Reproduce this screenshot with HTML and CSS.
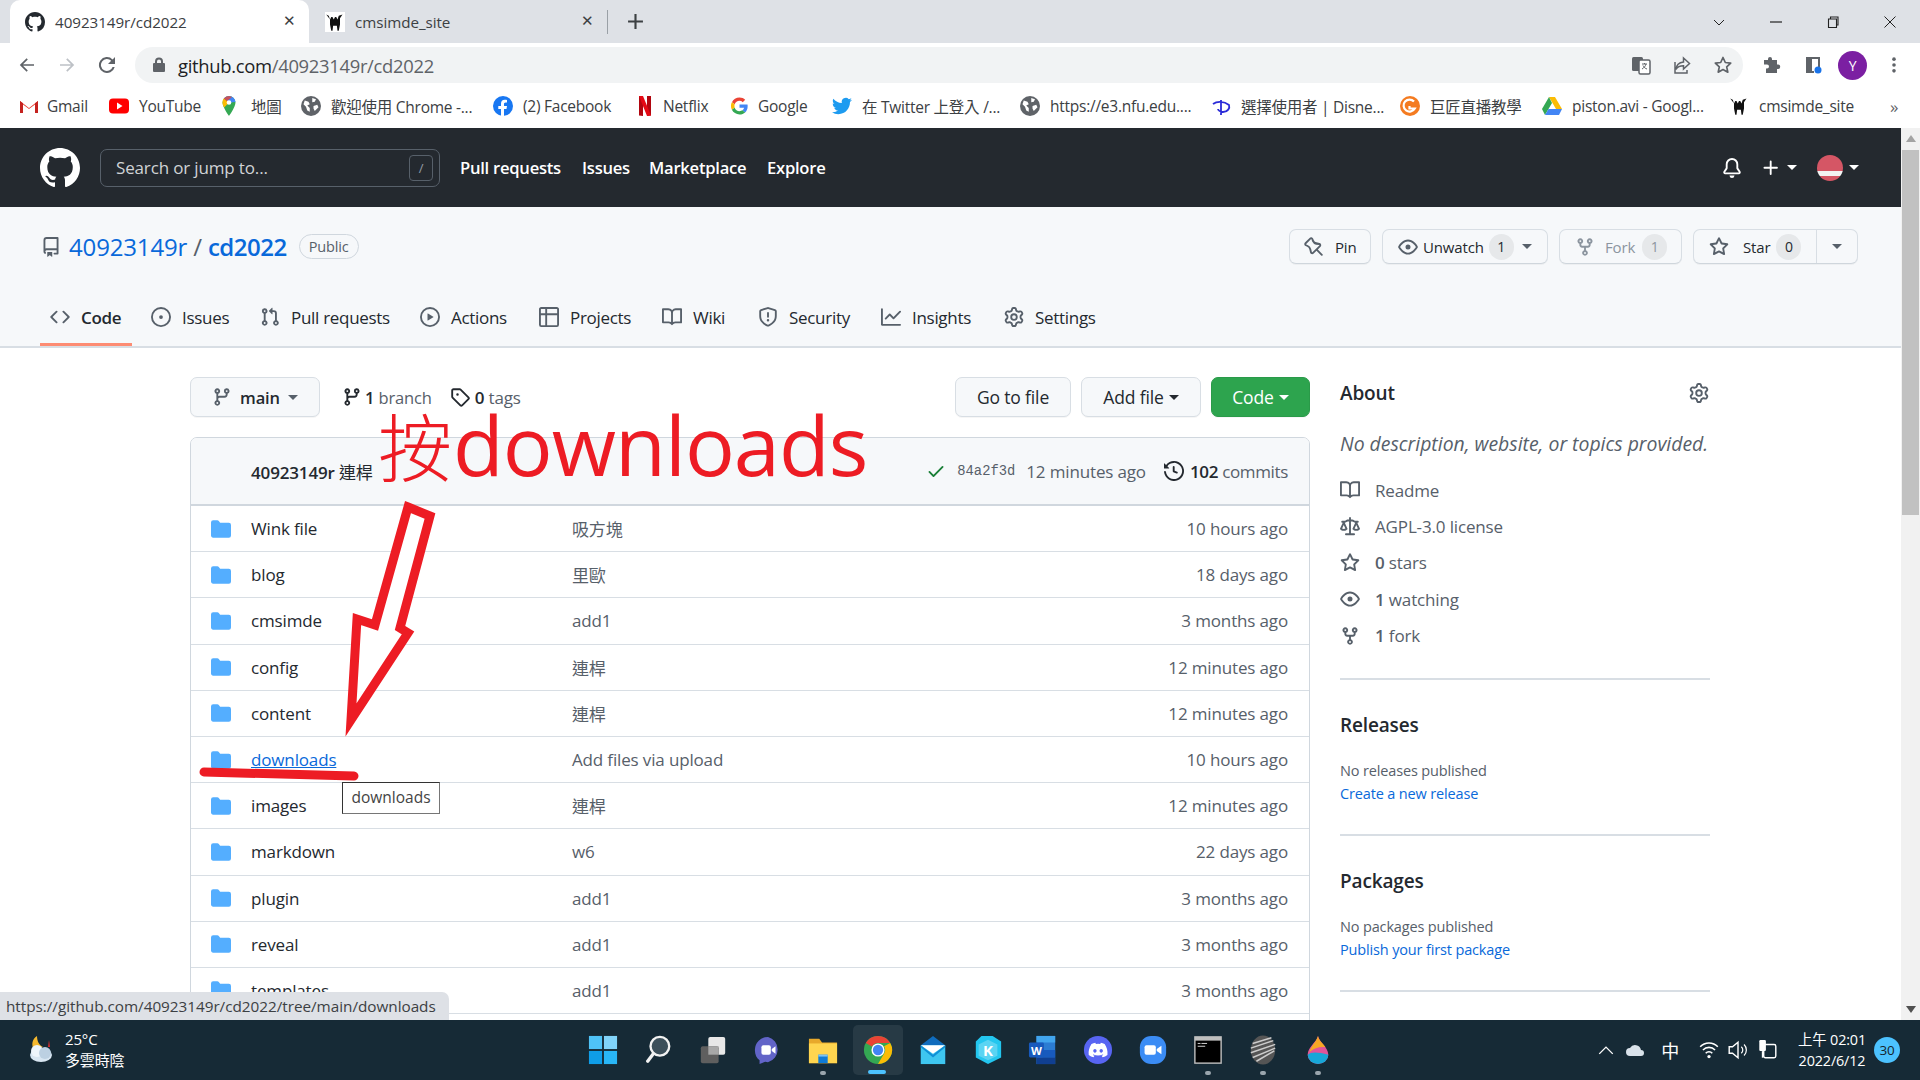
FILE: index.html
```html
<!DOCTYPE html>
<html lang="zh-Hant">
<head>
<meta charset="utf-8">
<title>40923149r/cd2022</title>
<link rel="stylesheet" href="styles.css">
</head>
<body>
<svg class="defs" width="0" height="0">
<defs>
<symbol id="i-mark" viewBox="0 0 16 16"><path d="M8 0C3.58 0 0 3.58 0 8c0 3.54 2.29 6.53 5.47 7.59.4.07.55-.17.55-.38 0-.19-.01-.82-.01-1.49-2.01.37-2.53-.49-2.69-.94-.09-.23-.48-.94-.82-1.13-.28-.15-.68-.52-.01-.53.63-.01 1.08.58 1.23.82.72 1.21 1.87.87 2.33.66.07-.52.28-.87.51-1.07-1.78-.2-3.64-.89-3.64-3.95 0-.87.31-1.59.82-2.15-.08-.2-.36-1.02.08-2.12 0 0 .67-.21 2.2.82.64-.18 1.32-.27 2-.27.68 0 1.36.09 2 .27 1.53-1.04 2.2-.82 2.2-.82.44 1.1.16 1.92.08 2.12.51.56.82 1.27.82 2.15 0 3.07-1.87 3.75-3.65 3.95.29.25.54.73.54 1.48 0 1.07-.01 1.93-.01 2.2 0 .21.15.46.55.38A8.013 8.013 0 0016 8c0-4.42-3.58-8-8-8z"/></symbol>
<symbol id="i-repo" viewBox="0 0 16 16"><path d="M2 2.5A2.5 2.5 0 014.5 0h8.75a.75.75 0 01.75.75v12.5a.75.75 0 01-.75.75h-2.5a.75.75 0 110-1.5h1.75v-2h-8a1 1 0 00-.714 1.7.75.75 0 01-1.072 1.05A2.495 2.495 0 012 11.5v-9zm10.5-1V9h-8c-.356 0-.694.074-1 .208V2.5a1 1 0 011-1h8zM5 12.25v3.25a.25.25 0 00.4.2l1.45-1.087a.25.25 0 01.3 0L8.6 15.7a.25.25 0 00.4-.2v-3.25a.25.25 0 00-.25-.25h-3.5a.25.25 0 00-.25.25z"/></symbol>
<symbol id="i-code" viewBox="0 0 16 16"><path d="M4.72 3.22a.75.75 0 011.06 1.06L2.06 8l3.72 3.72a.75.75 0 11-1.06 1.06L.47 8.53a.75.75 0 010-1.06l4.25-4.25zm6.56 0a.75.75 0 10-1.06 1.06L13.94 8l-3.72 3.72a.75.75 0 101.06 1.06l4.25-4.25a.75.75 0 000-1.06l-4.25-4.25z"/></symbol>
<symbol id="i-issue" viewBox="0 0 16 16"><path d="M8 9.5a1.5 1.5 0 100-3 1.5 1.5 0 000 3z"/><path d="M8 0a8 8 0 100 16A8 8 0 008 0zM1.5 8a6.5 6.5 0 1113 0 6.5 6.5 0 01-13 0z"/></symbol>
<symbol id="i-pr" viewBox="0 0 16 16"><path d="M7.177 3.073L9.573.677A.25.25 0 0110 .854v4.792a.25.25 0 01-.427.177L7.177 3.427a.25.25 0 010-.354zM3.75 2.5a.75.75 0 100 1.5.75.75 0 000-1.5zm-2.25.75a2.25 2.25 0 113 2.122v5.256a2.251 2.251 0 11-1.5 0V5.372A2.25 2.25 0 011.5 3.25zM11 2.5h-1V4h1a1 1 0 011 1v5.628a2.251 2.251 0 101.5 0V5A2.5 2.5 0 0011 2.5zm1 10.25a.75.75 0 111.5 0 .75.75 0 01-1.5 0zM3.75 12a.75.75 0 100 1.5.75.75 0 000-1.5z"/></symbol>
<symbol id="i-play" viewBox="0 0 16 16"><path d="M1.5 8a6.5 6.5 0 1113 0 6.5 6.5 0 01-13 0zM8 0a8 8 0 100 16A8 8 0 008 0zM6.379 5.227A.25.25 0 006 5.442v5.117a.25.25 0 00.379.214l4.264-2.559a.25.25 0 000-.428L6.379 5.227z"/></symbol>
<symbol id="i-table" viewBox="0 0 16 16"><path d="M0 1.75C0 .784.784 0 1.75 0h12.5C15.216 0 16 .784 16 1.75v12.5A1.75 1.75 0 0114.25 16H1.75A1.75 1.75 0 010 14.25V1.75zM1.5 6.5v7.75c0 .138.112.25.25.25H5v-8H1.5zM5 5H1.5V1.75a.25.25 0 01.25-.25H5V5zm1.5 1.5v8h7.75a.25.25 0 00.25-.25V6.5h-8zm8-1.5h-8V1.5h7.75a.25.25 0 01.25.25V5z"/></symbol>
<symbol id="i-book" viewBox="0 0 16 16"><path d="M0 1.75A.75.75 0 01.75 1h4.253c1.227 0 2.317.59 3 1.501A3.744 3.744 0 0111.006 1h4.245a.75.75 0 01.75.75v10.5a.75.75 0 01-.75.75h-4.507a2.25 2.25 0 00-1.591.659l-.622.621a.75.75 0 01-1.06 0l-.622-.621A2.25 2.25 0 005.258 13H.75a.75.75 0 01-.75-.75V1.75zm8.755 3a2.25 2.25 0 012.25-2.25H14.5v9h-3.757c-.71 0-1.4.201-1.992.572l.004-7.322zm-1.504 7.324l.004-5.073-.002-2.253A2.25 2.25 0 005.003 2.5H1.5v9h3.757a3.75 3.75 0 011.994.574z"/></symbol>
<symbol id="i-shield" viewBox="0 0 16 16"><path d="M7.467.133a1.75 1.75 0 011.066 0l5.25 1.68A1.75 1.75 0 0115 3.48V7c0 1.566-.32 3.182-1.303 4.682-.983 1.498-2.585 2.813-5.032 3.855a1.7 1.7 0 01-1.33 0c-2.447-1.042-4.049-2.357-5.032-3.855C1.32 10.182 1 8.566 1 7V3.48a1.75 1.75 0 011.217-1.667l5.25-1.68zm.61 1.429a.25.25 0 00-.153 0l-5.25 1.68a.25.25 0 00-.174.238V7c0 1.358.275 2.666 1.057 3.86.784 1.194 2.121 2.34 4.366 3.297a.2.2 0 00.154 0c2.245-.956 3.582-2.104 4.366-3.298C13.225 9.666 13.5 8.36 13.5 7V3.48a.25.25 0 00-.174-.237l-5.25-1.68zM9 10.5a1 1 0 11-2 0 1 1 0 012 0zm-.25-5.75a.75.75 0 10-1.5 0v3a.75.75 0 001.5 0v-3z"/></symbol>
<symbol id="i-graph" viewBox="0 0 16 16"><path d="M1.5 1.75a.75.75 0 00-1.5 0v12.5c0 .414.336.75.75.75h14.5a.75.75 0 000-1.5H1.5V1.75zm14.28 2.53a.75.75 0 00-1.06-1.06L10 7.94 7.53 5.47a.75.75 0 00-1.06 0L3.22 8.72a.75.75 0 001.06 1.06L7 7.06l2.47 2.47a.75.75 0 001.06 0l5.25-5.25z"/></symbol>
<symbol id="i-gear" viewBox="0 0 16 16"><path d="M7.429 1.525a6.593 6.593 0 011.142 0c.036.003.108.036.137.146l.289 1.105c.147.56.55.967.997 1.189.174.086.341.183.501.29.417.278.97.423 1.53.27l1.102-.303c.11-.03.175.016.195.046.219.31.41.641.573.989.014.031.022.11-.059.19l-.815.806c-.411.406-.562.957-.53 1.456a4.588 4.588 0 010 .582c-.032.499.119 1.05.53 1.456l.815.806c.08.08.073.159.059.19a6.494 6.494 0 01-.573.99c-.02.029-.086.074-.195.045l-1.103-.303c-.559-.153-1.112-.008-1.529.27-.16.107-.327.204-.5.29-.449.222-.851.628-.998 1.189l-.289 1.105c-.029.11-.101.143-.137.146a6.613 6.613 0 01-1.142 0c-.036-.003-.108-.037-.137-.146l-.289-1.105c-.147-.56-.55-.967-.997-1.189a4.502 4.502 0 01-.501-.29c-.417-.278-.97-.423-1.53-.27l-1.102.303c-.11.03-.175-.016-.195-.046a6.492 6.492 0 01-.573-.989c-.014-.031-.022-.11.059-.19l.815-.806c.411-.406.562-.957.53-1.456a4.587 4.587 0 010-.582c.032-.499-.119-1.05-.53-1.456l-.815-.806c-.08-.08-.073-.159-.059-.19a6.44 6.44 0 01.573-.99c.02-.029.086-.075.195-.045l1.103.303c.559.153 1.112.008 1.529-.27.16-.107.327-.204.5-.29.449-.222.851-.628.998-1.189l.289-1.105c.029-.11.101-.143.137-.146zM8 0c-.236 0-.47.01-.701.03-.743.065-1.29.615-1.458 1.261l-.29 1.106c-.017.066-.078.158-.211.224a5.994 5.994 0 00-.668.386c-.123.082-.233.09-.3.071L3.27 2.776c-.644-.177-1.392.02-1.82.63a7.977 7.977 0 00-.704 1.217c-.315.675-.111 1.422.363 1.891l.815.806c.05.048.098.147.088.294a6.084 6.084 0 000 .772c.01.147-.038.246-.088.294l-.815.806c-.474.469-.678 1.216-.363 1.891.2.428.436.835.704 1.218.428.609 1.176.806 1.82.63l1.103-.303c.066-.019.176-.011.299.071.213.143.436.272.668.386.133.066.194.158.212.224l.289 1.106c.169.646.715 1.196 1.458 1.26a8.094 8.094 0 001.402 0c.743-.064 1.29-.614 1.458-1.26l.29-1.106c.017-.066.078-.158.211-.224a5.98 5.98 0 00.668-.386c.123-.082.233-.09.3-.071l1.102.302c.644.177 1.392-.02 1.82-.63.268-.382.505-.789.704-1.217.315-.675.111-1.422-.364-1.891l-.814-.806c-.05-.048-.098-.147-.088-.294a6.1 6.1 0 000-.772c-.01-.147.039-.246.088-.294l.814-.806c.475-.469.679-1.216.364-1.891a7.992 7.992 0 00-.704-1.218c-.428-.609-1.176-.806-1.82-.63l-1.103.303c-.066.019-.176.011-.299-.071a5.991 5.991 0 00-.668-.386c-.133-.066-.194-.158-.212-.224L10.16 1.29C9.99.645 9.444.095 8.701.031A8.094 8.094 0 008 0zm1.5 8a1.5 1.5 0 11-3 0 1.5 1.5 0 013 0zM11 8a3 3 0 11-6 0 3 3 0 016 0z"/></symbol>
<symbol id="i-bell" viewBox="0 0 16 16"><path d="M8 16a2 2 0 001.985-1.75c.017-.137-.097-.25-.235-.25h-3.5c-.138 0-.252.113-.235.25A2 2 0 008 16z"/><path d="M8 1.5A3.5 3.5 0 004.5 5v2.947c0 .346-.102.683-.294.97l-1.703 2.556a.018.018 0 00-.003.01l.001.006c0 .002.002.004.004.006a.017.017 0 00.006.004l.007.001h10.964l.007-.001a.018.018 0 00.006-.004.016.016 0 00.004-.006l.001-.007a.017.017 0 00-.003-.01l-1.703-2.554a1.75 1.75 0 01-.294-.97V5A3.5 3.5 0 008 1.5zM3 5a5 5 0 0110 0v2.947c0 .05.015.098.042.139l1.703 2.555A1.518 1.518 0 0113.482 13H2.518a1.518 1.518 0 01-1.263-2.36l1.703-2.554A.25.25 0 003 7.947V5z"/></symbol>
<symbol id="i-plus" viewBox="0 0 16 16"><path d="M7.75 2a.75.75 0 01.75.75V7h4.25a.75.75 0 110 1.5H8.5v4.25a.75.75 0 11-1.5 0V8.5H2.75a.75.75 0 010-1.5H7V2.75A.75.75 0 017.75 2z"/></symbol>
<symbol id="i-pin" viewBox="0 0 16 16"><path d="M4.456.734a1.75 1.75 0 012.826.504l.613 1.327a3.081 3.081 0 002.084 1.707l2.454.584c1.332.317 1.8 1.972.832 2.94L11.06 10l3.72 3.72a.75.75 0 11-1.06 1.06L10 11.06l-2.204 2.205c-.968.968-2.623.5-2.94-.832l-.584-2.454a3.081 3.081 0 00-1.707-2.084l-1.327-.613a1.75 1.75 0 01-.504-2.826L4.456.734zM5.92 1.866a.25.25 0 00-.404-.072L1.794 5.516a.25.25 0 00.072.404l1.328.613A4.582 4.582 0 015.73 9.63l.584 2.454a.25.25 0 00.42.12l5.47-5.47a.25.25 0 00-.12-.42L9.63 6.23a4.581 4.581 0 01-3.098-2.537L5.92 1.866z"/></symbol>
<symbol id="i-eye" viewBox="0 0 16 16"><path d="M1.679 7.932c.412-.621 1.242-1.75 2.366-2.717C5.175 4.242 6.527 3.5 8 3.5c1.473 0 2.824.742 3.955 1.715 1.124.967 1.954 2.096 2.366 2.717a.119.119 0 010 .136c-.412.621-1.242 1.75-2.366 2.717C10.825 11.758 9.473 12.5 8 12.5c-1.473 0-2.824-.742-3.955-1.715C2.921 9.818 2.091 8.69 1.679 8.068a.119.119 0 010-.136zM8 2c-1.981 0-3.67.992-4.933 2.078C1.797 5.169.88 6.423.43 7.1a1.619 1.619 0 000 1.798c.45.678 1.367 1.932 2.637 3.024C4.329 13.008 6.019 14 8 14c1.981 0 3.67-.992 4.933-2.078 1.27-1.091 2.187-2.345 2.637-3.023a1.619 1.619 0 000-1.798c-.45-.678-1.367-1.932-2.637-3.023C11.671 2.992 9.981 2 8 2zm0 8a2 2 0 100-4 2 2 0 000 4z"/></symbol>
<symbol id="i-fork" viewBox="0 0 16 16"><path d="M5 3.25a.75.75 0 11-1.5 0 .75.75 0 011.5 0zm0 2.122a2.25 2.25 0 10-1.5 0v.878A2.25 2.25 0 005.75 8.5h1.5v2.128a2.251 2.251 0 101.5 0V8.5h1.5a2.25 2.25 0 002.25-2.25v-.878a2.25 2.25 0 10-1.5 0v.878a.75.75 0 01-.75.75h-4.5A.75.75 0 015 6.25v-.878zm3.75 7.378a.75.75 0 11-1.5 0 .75.75 0 011.5 0zm3-8.75a.75.75 0 100-1.5.75.75 0 000 1.5z"/></symbol>
<symbol id="i-star" viewBox="0 0 16 16"><path d="M8 .25a.75.75 0 01.673.418l1.882 3.815 4.21.612a.75.75 0 01.416 1.279l-3.046 2.97.719 4.192a.75.75 0 01-1.088.791L8 12.347l-3.766 1.98a.75.75 0 01-1.088-.79l.72-4.194L.818 6.374a.75.75 0 01.416-1.28l4.21-.611L7.327.668A.75.75 0 018 .25zm0 2.445L6.615 5.5a.75.75 0 01-.564.41l-3.097.45 2.24 2.184a.75.75 0 01.216.664l-.528 3.084 2.769-1.456a.75.75 0 01.698 0l2.77 1.456-.53-3.084a.75.75 0 01.216-.664l2.24-2.183-3.096-.45a.75.75 0 01-.564-.41L8 2.694v.001z"/></symbol>
<symbol id="i-branch" viewBox="0 0 16 16"><path d="M11.75 2.5a.75.75 0 100 1.5.75.75 0 000-1.5zm-2.25.75a2.25 2.25 0 113 2.122V6A2.5 2.5 0 0110 8.5H6a1 1 0 00-1 1v1.128a2.251 2.251 0 11-1.5 0V5.372a2.25 2.25 0 111.5 0v1.836A2.492 2.492 0 016 7h4a1 1 0 001-1v-.628A2.25 2.25 0 019.5 3.25zM4.25 12a.75.75 0 100 1.5.75.75 0 000-1.5zM3.5 3.25a.75.75 0 111.5 0 .75.75 0 01-1.5 0z"/></symbol>
<symbol id="i-tag" viewBox="0 0 16 16"><path d="M2.5 7.775V2.75a.25.25 0 01.25-.25h5.025a.25.25 0 01.177.073l6.25 6.25a.25.25 0 010 .354l-5.025 5.025a.25.25 0 01-.354 0l-6.25-6.25a.25.25 0 01-.073-.177zm-1.5 0V2.75C1 1.784 1.784 1 2.75 1h5.025c.464 0 .91.184 1.238.513l6.25 6.25a1.75 1.75 0 010 2.474l-5.026 5.026a1.75 1.75 0 01-2.474 0l-6.25-6.25A1.75 1.75 0 011 7.775zM6 5a1 1 0 100 2 1 1 0 000-2z"/></symbol>
<symbol id="i-check" viewBox="0 0 16 16"><path d="M13.78 4.22a.75.75 0 010 1.06l-7.25 7.25a.75.75 0 01-1.06 0L2.22 9.28a.75.75 0 011.06-1.06L6 10.94l6.72-6.72a.75.75 0 011.06 0z"/></symbol>
<symbol id="i-history" viewBox="0 0 16 16"><path d="M1.643 3.143L.427 1.927A.25.25 0 000 2.104V5.75c0 .138.112.25.25.25h3.646a.25.25 0 00.177-.427L2.715 4.215a6.5 6.5 0 11-1.18 4.458.75.75 0 10-1.493.154 8.001 8.001 0 101.6-5.684zM7.75 4a.75.75 0 01.75.75v2.992l2.028.812a.75.75 0 01-.557 1.392l-2.5-1A.75.75 0 017 8.25v-3.5A.75.75 0 017.75 4z"/></symbol>
<symbol id="i-folder" viewBox="0 0 16 16"><path d="M1.75 1A1.75 1.75 0 000 2.75v10.5C0 14.216.784 15 1.75 15h12.5A1.75 1.75 0 0016 13.25v-8.5A1.75 1.75 0 0014.25 3H7.5a.25.25 0 01-.2-.1l-.9-1.2C6.07 1.26 5.55 1 5 1H1.75z"/></symbol>
<symbol id="i-law" viewBox="0 0 16 16"><path d="M8.75.75a.75.75 0 00-1.5 0V2h-.984c-.305 0-.604.08-.869.23l-1.288.737A.25.25 0 013.984 3H1.75a.75.75 0 000 1.5h.428L.066 9.192a.75.75 0 00.154.838l.53-.53-.53.53v.001l.002.002.002.002.006.006.016.015.045.04a3.514 3.514 0 00.686.45A4.492 4.492 0 003 11c.88 0 1.556-.22 2.023-.454a3.515 3.515 0 00.686-.45l.045-.04.016-.015.006-.006.002-.002.001-.002L5.25 9.5l.53.53a.75.75 0 00.154-.838L3.822 4.5h.162c.305 0 .604-.08.869-.23l1.289-.737a.25.25 0 01.124-.033h.984V13h-2.5a.75.75 0 000 1.5h6.5a.75.75 0 000-1.5h-2.5V3.5h.984a.25.25 0 01.124.033l1.29.736c.264.152.563.231.868.231h.162l-2.112 4.692a.75.75 0 00.154.838l.53-.53-.53.53v.001l.002.002.002.002.006.006.016.015.045.04a3.517 3.517 0 00.686.45A4.492 4.492 0 0013 11c.88 0 1.556-.22 2.023-.454a3.512 3.512 0 00.686-.45l.045-.04.01-.01.006-.005.006-.006.002-.002.001-.002-.529-.531.53.53a.75.75 0 00.154-.838L13.823 4.5h.427a.75.75 0 000-1.5h-2.234a.25.25 0 01-.124-.033l-1.29-.736A1.75 1.75 0 009.735 2H8.75V.75zM1.695 9.227c.285.135.718.273 1.305.273s1.02-.138 1.305-.273L3 6.327l-1.305 2.9zm10 0c.285.135.718.273 1.305.273s1.02-.138 1.305-.273L13 6.327l-1.305 2.9z"/></symbol>
<symbol id="i-globe" viewBox="0 0 16 16"><circle cx="8" cy="8" r="8" fill="#5f6368"/><path d="M3 3.5l3 1 1 2-2 1 2 2v3l-2-1-1-3-2-2zM9 1.5l3 1-1 2-2 .5zM10 8l3-1 1 2-3 3-1-2z" fill="#fff"/></symbol>
<symbol id="i-camel" viewBox="0 0 16 16"><path d="M1 2l2 1 1 3 1-2h1l1 2 1-2h1l1 2 1-3 3-1-2 3 0 5-1 5h-1l-.5-4H6.5L6 15H5L4 10V6z" fill="#111"/></symbol>
</defs>
</svg>

<header class="tabstrip">
  <div class="tab tab-active">
    <svg class="ic16 tab-fav"><use href="#i-mark"/></svg>
    <span class="tab-title">40923149r/cd2022</span>
    <span class="tab-close">✕</span>
  </div>
  <div class="tab tab-idle">
    <svg class="ic16 tab-fav camel-box"><use href="#i-camel"/></svg>
    <span class="tab-title">cmsimde_site</span>
    <span class="tab-close">✕</span>
  </div>
  <span class="tab-sep"></span>
  <svg class="newtab" viewBox="0 0 16 16"><path d="M7 1h2v6h6v2H9v6H7V9H1V7h6z"/></svg>
  <div class="winctl">
    <svg viewBox="0 0 12 12"><path d="M1 4l5 5 5-5" fill="none" stroke="#222" stroke-width="1"/></svg>
    <svg viewBox="0 0 12 12"><path d="M0 6h12" stroke="#222" stroke-width="1.2"/></svg>
    <svg viewBox="0 0 12 12"><path d="M1.5 3h8v8.500h-8zM3.500 3V1h7.500v8h-1.500" fill="none" stroke="#222" stroke-width="1.100"/></svg>
    <svg viewBox="0 0 12 12"><path d="M.5.500l11 11M11.500.500l-11 11" stroke="#222" stroke-width="1"/></svg>
  </div>
</header>

<div class="toolbar">
  <svg class="nav-ic" viewBox="0 0 20 20"><path d="M17 9.200H6l4.800-4.800L9.600 3.200 2.800 10l6.800 6.800 1.200-1.200L6 10.800h11z" fill="#5f6368"/></svg>
  <svg class="nav-ic" viewBox="0 0 20 20"><path d="M3 9.200h11L9.200 4.400l1.200-1.200 6.800 6.800-6.800 6.800-1.200-1.200 4.800-4.800H3z" fill="#bdc1c6"/></svg>
  <svg class="nav-ic" viewBox="0 0 20 20"><path d="M15.600 4.400A8 8 0 1017.700 12h-2.100a6 6 0 11-1.400-6.200L11 9h7V2z" fill="#5f6368"/></svg>
  <div class="omnibox">
    <svg class="lock" viewBox="0 0 14 16"><path d="M3 6V4.500a4 4 0 018 0V6h1a1 1 0 011 1v7a1 1 0 01-1 1H2a1 1 0 01-1-1V7a1 1 0 011-1zm2 0h4V4.500a2 2 0 00-4 0z" fill="#5f6368"/></svg>
    <span class="url"><span class="url-host">github.com</span>/40923149r/cd2022</span>
    <div class="omni-actions">
      <svg viewBox="0 0 20 20"><rect x="1" y="2" width="11" height="14" rx="1.500" fill="#5f6368"/><rect x="8" y="5" width="11" height="14" rx="1.500" fill="#fff" stroke="#5f6368" stroke-width="1.500"/><path d="M11 9h5M13.500 8v1M15 9c-.5 2-2 4-4 5M12 10.500c.8 1.500 2 3 4 3.500" stroke="#5f6368" fill="none"/></svg>
      <svg viewBox="0 0 20 20"><path d="M11.500 3l6 5.500-6 5.500v-3.200c-3.500 0-6 1-7.500 3.700.3-4.200 2.800-7 7.500-7.500zM3 7v11h12v-3" fill="none" stroke="#5f6368" stroke-width="1.500"/></svg>
      <svg viewBox="0 0 20 20"><path d="M10 2.500l2.300 5 5.400.6-4 3.700 1.100 5.400-4.800-2.700-4.800 2.700 1.100-5.400-4-3.700 5.400-.6z" fill="none" stroke="#5f6368" stroke-width="1.700" stroke-linejoin="round"/></svg>
    </div>
  </div>
  <div class="tool-actions">
    <svg class="puzzle" viewBox="0 0 20 20"><path d="M8 2a2 2 0 012 2v1h5v4.500h1a2.200 2.200 0 010 4.500h-1v4H4v-4.500h1a2 2 0 000-4H2V5h4V4a2 2 0 012-2z" fill="#5f6368"/></svg>
    <svg class="panel" viewBox="0 0 20 20"><path d="M3 2h14v10h-2V4H9v12h2v2H3z" fill="#5f6368"/><path d="M4.500 4H7v12H4.500z" fill="#5f6368"/><circle cx="15" cy="15" r="3.500" fill="#1a73e8"/></svg>
    <span class="avatar">Y</span>
    <svg class="dots" viewBox="0 0 4 20"><circle cx="2" cy="3.500" r="2"/><circle cx="2" cy="10" r="2"/><circle cx="2" cy="16.500" r="2"/></svg>
  </div>
</div>

<nav class="bookmarks">
  <span class="bm"><svg viewBox="0 0 20 16"><path d="M1 15V3l9 7 9-7v12h-3V6.500L10 11 4 6.500V15z" fill="#ea4335"/><path d="M1 15V3l3 2.300V15z" fill="#c5221f"/><path d="M19 15V3l-3 2.300V15z" fill="#c5221f"/></svg>Gmail</span>
  <span class="bm"><svg viewBox="0 0 20 16"><rect width="20" height="15" y=".5" rx="4" fill="#f00"/><path d="M8 4.500l5.500 3.500L8 11.500z" fill="#fff"/></svg>YouTube</span>
  <span class="bm bm-map"><svg viewBox="0 0 14 20"><path d="M7 0a6.500 6.500 0 00-6.500 6.500C.5 11 7 20 7 20s6.500-9 6.500-13.500A6.500 6.500 0 007 0z" fill="#34a853"/><path d="M7 0a6.500 6.500 0 00-5.200 2.600L7 6.500 13.500 6A6.500 6.500 0 007 0z" fill="#4285f4"/><path d="M1.800 2.600A6.500 6.500 0 00.500 6.500c0 1.500.7 3.300 1.700 5L7 6.500z" fill="#fbbc04"/><path d="M7 0a6.500 6.500 0 00-5.200 2.600l3 2.600L10 1z" fill="#ea4335" opacity=".8"/><circle cx="7" cy="6.500" r="2.300" fill="#fff"/></svg>地圖</span>
  <span class="bm"><svg><use href="#i-globe"/></svg>歡迎使用 Chrome -...</span>
  <span class="bm"><svg viewBox="0 0 20 20"><circle cx="10" cy="10" r="10" fill="#1877f2"/><path d="M13.500 13l.5-3h-3V8c0-.8.400-1.600 1.700-1.600H14V3.900s-1.200-.2-2.300-.2C9.300 3.700 8 5.100 8 7.700V10H5.300v3H8v7h3v-7z" fill="#fff"/></svg>(2) Facebook</span>
  <span class="bm bm-nf"><svg viewBox="0 0 14 20"><path d="M1 0h4v20l-4-.4z" fill="#b1060f"/><path d="M9 0h4v19.600L9 20z" fill="#b1060f"/><path d="M1 0h4l8 19.600-4 .4z" fill="#e50914"/></svg>Netflix</span>
  <span class="bm bm-g"><svg viewBox="0 0 48 48"><path d="M24 9.500c3.500 0 6.700 1.200 9.200 3.600l6.900-6.900C35.900 2.400 30.500 0 24 0 14.600 0 6.500 5.400 2.600 13.200l8 6.200C12.400 13.700 17.700 9.500 24 9.500z" fill="#ea4335"/><path d="M47 24.500c0-1.600-.1-3.100-.4-4.500H24v9h13c-.6 3-2.300 5.500-4.800 7.200l7.700 6C44.400 38.100 47 31.900 47 24.500z" fill="#4285f4"/><path d="M10.500 28.600a14.500 14.500 0 010-9.200l-8-6.200a24 24 0 000 21.600z" fill="#fbbc05"/><path d="M24 48c6.500 0 11.900-2.100 15.900-5.800l-7.700-6c-2.200 1.500-5 2.300-8.200 2.300-6.300 0-11.600-4.200-13.500-9.900l-8 6.200C6.500 42.600 14.600 48 24 48z" fill="#34a853"/></svg>Google</span>
  <span class="bm"><svg viewBox="0 0 24 24"><path fill="#1d9bf0" d="M23.953 4.570a10 10 0 01-2.825.775 4.958 4.958 0 002.163-2.723c-.951.555-2.005.959-3.127 1.184a4.920 4.920 0 00-8.384 4.482C7.690 8.095 4.067 6.130 1.640 3.162a4.822 4.822 0 00-.666 2.475c0 1.710.870 3.213 2.188 4.096a4.904 4.904 0 01-2.228-.616v.060a4.923 4.923 0 003.946 4.827 4.996 4.996 0 01-2.212.085 4.936 4.936 0 004.604 3.417 9.867 9.867 0 01-6.102 2.105c-.390 0-.779-.023-1.170-.067a13.995 13.995 0 007.557 2.209c9.053 0 13.998-7.496 13.998-13.985 0-.210 0-.420-.015-.630A9.935 9.935 0 0024 4.590z"/></svg>在 Twitter 上登入 /...</span>
  <span class="bm"><svg><use href="#i-globe"/></svg>https://e3.nfu.edu....</span>
  <span class="bm"><svg viewBox="0 0 20 20"><path d="M2 8c4-3 11-3 16 1 1 3-1 7-6 7-3 0-5-2-5-3M10 4v15" fill="none" stroke="#2b2bd8" stroke-width="1.800"/></svg>選擇使用者 | Disne...</span>
  <span class="bm"><svg viewBox="0 0 20 20"><circle cx="10" cy="10" r="10" fill="#f47b20"/><path d="M14 5.500a6 6 0 10.800 7H9.500V10" fill="none" stroke="#fff" stroke-width="2.200"/></svg>巨匠直播教學</span>
  <span class="bm"><svg viewBox="0 0 20 18"><path d="M7 0h6l7 12h-6z" fill="#fbbc04"/><path d="M7 0L0 12l3 6 7-12z" fill="#34a853"/><path d="M3 18h14l3-6H6.500z" fill="#4285f4"/></svg>piston.avi - Googl...</span>
  <span class="bm"><svg><use href="#i-camel"/></svg>cmsimde_site</span>
  <span class="bm-more">»</span>
</nav>

<div class="viewport">
  <main class="page">
    <div class="gh-header">
      <svg class="gh-logo"><use href="#i-mark"/></svg>
      <div class="gh-search"><span>Search or jump to...</span><kbd>/</kbd></div>
      <a class="gh-nav nav-a">Pull requests</a>
      <a class="gh-nav nav-b">Issues</a>
      <a class="gh-nav nav-c">Marketplace</a>
      <a class="gh-nav nav-d">Explore</a>
      <div class="gh-right">
        <svg class="ic-w"><use href="#i-bell"/></svg>
        <svg class="ic-w plus"><use href="#i-plus"/></svg><i class="caret caret-w"></i>
        <span class="me"></span><i class="caret caret-w"></i>
      </div>
    </div>

    <div class="repohead">
      <div class="title-row">
        <svg class="ic-repo"><use href="#i-repo"/></svg>
        <a class="repo-owner">40923149r</a><span class="repo-slash">/</span><a class="repo-name">cd2022</a>
        <span class="label">Public</span>
        <div class="repo-actions">
          <span class="rbtn rb-pin"><svg class="ic"><use href="#i-pin"/></svg>Pin</span>
          <span class="rbtn rb-watch"><svg class="ic"><use href="#i-eye"/></svg>Unwatch<b class="pill">1</b><i class="caret"></i></span>
          <span class="rbtn rb-fork"><svg class="ic"><use href="#i-fork"/></svg>Fork<b class="pill">1</b></span>
          <span class="rbtn rb-star"><svg class="ic"><use href="#i-star"/></svg>Star<b class="pill">0</b><span class="rb-split"><i class="caret"></i></span></span>
        </div>
      </div>
      <nav class="rtabs">
        <a class="rtab rtab-on"><svg class="ic"><use href="#i-code"/></svg>Code</a>
        <a class="rtab"><svg class="ic"><use href="#i-issue"/></svg>Issues</a>
        <a class="rtab"><svg class="ic"><use href="#i-pr"/></svg>Pull requests</a>
        <a class="rtab"><svg class="ic"><use href="#i-play"/></svg>Actions</a>
        <a class="rtab"><svg class="ic"><use href="#i-table"/></svg>Projects</a>
        <a class="rtab"><svg class="ic"><use href="#i-book"/></svg>Wiki</a>
        <a class="rtab"><svg class="ic"><use href="#i-shield"/></svg>Security</a>
        <a class="rtab"><svg class="ic"><use href="#i-graph"/></svg>Insights</a>
        <a class="rtab"><svg class="ic"><use href="#i-gear"/></svg>Settings</a>
      </nav>
    </div>

    <div class="layout">
      <section class="maincol">
        <div class="filebar">
          <span class="btn btn-branch"><svg class="ic"><use href="#i-branch"/></svg><b>main</b><i class="caret"></i></span>
          <span class="meta meta-branch"><svg class="ic dark"><use href="#i-branch"/></svg><span><b>1</b> branch</span></span>
          <span class="meta meta-tag"><svg class="ic dark"><use href="#i-tag"/></svg><span><b>0</b> tags</span></span>
          <span class="btn btn-go">Go to file</span>
          <span class="btn btn-add">Add file<i class="caret"></i></span>
          <span class="btn btn-code">Code<i class="caret caret-w"></i></span>
        </div>
        <div class="filebox">
          <div class="commit">
            <span class="commit-msg"><b>40923149r</b> 連桿</span>
            <svg class="ic-check"><use href="#i-check"/></svg>
            <code class="sha">84a2f3d</code>
            <span class="commit-age">12 minutes ago</span>
            <svg class="ic dark hist"><use href="#i-history"/></svg>
            <span class="commit-count"><b>102</b> commits</span>
          </div>
          <div class="row"><svg class="folder"><use href="#i-folder"/></svg><span class="name">Wink file</span><span class="msg">吸方塊</span><span class="age">10 hours ago</span></div>
          <div class="row"><svg class="folder"><use href="#i-folder"/></svg><span class="name">blog</span><span class="msg">里歐</span><span class="age">18 days ago</span></div>
          <div class="row"><svg class="folder"><use href="#i-folder"/></svg><span class="name">cmsimde</span><span class="msg">add1</span><span class="age">3 months ago</span></div>
          <div class="row"><svg class="folder"><use href="#i-folder"/></svg><span class="name">config</span><span class="msg">連桿</span><span class="age">12 minutes ago</span></div>
          <div class="row"><svg class="folder"><use href="#i-folder"/></svg><span class="name">content</span><span class="msg">連桿</span><span class="age">12 minutes ago</span></div>
          <div class="row"><svg class="folder"><use href="#i-folder"/></svg><a class="name name-link">downloads</a><span class="msg">Add files via upload</span><span class="age">10 hours ago</span></div>
          <div class="row"><svg class="folder"><use href="#i-folder"/></svg><span class="name">images</span><span class="msg">連桿</span><span class="age">12 minutes ago</span></div>
          <div class="row"><svg class="folder"><use href="#i-folder"/></svg><span class="name">markdown</span><span class="msg">w6</span><span class="age">22 days ago</span></div>
          <div class="row"><svg class="folder"><use href="#i-folder"/></svg><span class="name">plugin</span><span class="msg">add1</span><span class="age">3 months ago</span></div>
          <div class="row"><svg class="folder"><use href="#i-folder"/></svg><span class="name">reveal</span><span class="msg">add1</span><span class="age">3 months ago</span></div>
          <div class="row"><svg class="folder"><use href="#i-folder"/></svg><span class="name">templates</span><span class="msg">add1</span><span class="age">3 months ago</span></div>
          <div class="row"></div>
        </div>
      </section>

      <aside class="side">
        <div class="about-head"><h2>About</h2><svg class="ic"><use href="#i-gear"/></svg></div>
        <p class="about-desc">No description, website, or topics provided.</p>
        <ul class="about-list">
          <li><svg class="ic"><use href="#i-book"/></svg>Readme</li>
          <li><svg class="ic"><use href="#i-law"/></svg>AGPL-3.0 license</li>
          <li><svg class="ic"><use href="#i-star"/></svg><b>0</b>&nbsp;stars</li>
          <li><svg class="ic"><use href="#i-eye"/></svg><b>1</b>&nbsp;watching</li>
          <li><svg class="ic"><use href="#i-fork"/></svg><b>1</b>&nbsp;fork</li>
        </ul>
        <div class="side-block">
          <h2>Releases</h2>
          <p class="side-note">No releases published</p>
          <a class="side-link">Create a new release</a>
        </div>
        <div class="side-block">
          <h2>Packages</h2>
          <p class="side-note">No packages published</p>
          <a class="side-link">Publish your first package</a>
        </div>
        <div class="side-end"></div>
      </aside>
    </div>
  </main>
  <div class="scrollbar">
    <i class="sb-up"></i>
    <div class="sb-thumb"></div>
    <i class="sb-down"></i>
  </div>
</div>

<footer class="taskbar">
  <div class="weather">
    <svg viewBox="0 0 32 32"><path d="M12 2c-5 3-6 9-3 14l9-3c-4-2-6-6-6-11z" fill="#f5b82e"/><path d="M24 6l1 7h-2z" fill="#d92b2b"/><ellipse cx="16" cy="21" rx="11" ry="7" fill="#d8e6f2"/><circle cx="12" cy="17" r="6" fill="#eef5fb"/><circle cx="20" cy="19" r="6" fill="#bcd0e2"/></svg>
    <div class="weather-text"><span>25°C</span><span>多雲時陰</span></div>
  </div>
  <div class="apps">
    <span class="app"><svg viewBox="0 0 32 32"><rect x="1" y="1" width="14" height="14" fill="#4fc3f7"/><rect x="17" y="1" width="14" height="14" fill="#81d4fa"/><rect x="1" y="17" width="14" height="14" fill="#0f9de8"/><rect x="17" y="17" width="14" height="14" fill="#29b6f6"/></svg></span>
    <span class="app"><svg viewBox="0 0 32 32"><circle cx="18" cy="12" r="10" fill="#3c4f5a" stroke="#f2f2f2" stroke-width="2.500"/><path d="M11 20l-6 8" stroke="#f2f2f2" stroke-width="3.500" stroke-linecap="round"/></svg></span>
    <span class="app"><svg viewBox="0 0 32 32"><rect x="11" y="2" width="18" height="19" rx="2" fill="#e8e8e8"/><rect x="3" y="12" width="19" height="18" rx="2" fill="#5f5f5f"/><rect x="11" y="12" width="11" height="9" fill="#a8a8a8"/></svg></span>
    <span class="app"><svg viewBox="0 0 32 32"><path d="M16 2a14 14 0 00-14 14c0 5 2 9 5 11v4l6-2.500c1 .300 2 .500 3 .500a14 14 0 000-27z" fill="#6264c8"/><rect x="9" y="11" width="10" height="10" rx="2" fill="#fff"/><path d="M20 15l4-3v8l-4-3z" fill="#fff"/></svg></span>
    <span class="app app-dot"><svg viewBox="0 0 32 32"><path d="M1 4h11l3 4h16v22H1z" fill="#e8a92b"/><rect x="1" y="9" width="30" height="21" fill="#ffd54f"/><rect x="11" y="21" width="10" height="9" fill="#0f7bd6"/><rect x="11" y="21" width="10" height="2" fill="#7cc4f5"/></svg></span>
    <span class="app app-on"><svg viewBox="0 0 32 32"><circle cx="16" cy="16" r="15" fill="#34a853"/><path d="M16 1a15 15 0 0113 7.500H16a7.500 7.500 0 00-6.500 3.750L3 8.500A15 15 0 0116 1z" fill="#ea4335"/><path d="M29 8.500A15 15 0 0116 31l6.500-11.250A7.500 7.500 0 0022.500 12z" fill="#fbbc05"/><circle cx="16" cy="16" r="7" fill="#fff"/><circle cx="16" cy="16" r="5.500" fill="#4285f4"/></svg></span>
    <span class="app"><svg viewBox="0 0 32 32"><path d="M3 11L16 1l13 10v20H3z" fill="#0f6cbd"/><rect x="3" y="11" width="26" height="20" fill="#3ec6f0"/><path d="M3 11l13 9 13-9" fill="#fff"/><path d="M3 11l13 10 13-10v2L16 24 3 13z" fill="#0f8fd6"/></svg></span>
    <span class="app"><svg viewBox="0 0 32 32"><path d="M9 1h12l9 6v17l-14 7-13-7V7z" fill="#23c6ef"/><path d="M16 5l10 5v12l-10 5-10-5V10z" fill="#fff" opacity=".25"/><text x="16" y="22" class="app-k">K</text></svg></span>
    <span class="app"><svg viewBox="0 0 32 32"><path d="M9 1h20v30H9z" fill="#2b7cd3"/><path d="M9 1h20v7H9z" fill="#41a5ee"/><path d="M9 16h20v8H9z" fill="#185abd"/><path d="M9 24h20v7H9z" fill="#103f91"/><rect x="1" y="8" width="16" height="16" rx="1.500" fill="#185abd"/><text x="9" y="21" class="app-w">W</text></svg></span>
    <span class="app"><svg viewBox="0 0 32 32"><circle cx="16" cy="16" r="15" fill="#5865f2"/><g transform="translate(6 6) scale(.84)"><path fill="#fff" d="M20.317 4.370a19.791 19.791 0 00-4.885-1.515.074.074 0 00-.079.037c-.211.375-.445.865-.608 1.250a18.270 18.270 0 00-5.487 0 12.640 12.640 0 00-.618-1.250.077.077 0 00-.079-.037 19.736 19.736 0 00-4.885 1.515.070.070 0 00-.032.028C.533 9.046-.319 13.580.099 18.058a.082.082 0 00.031.056c2.053 1.508 4.041 2.423 5.993 3.030a.078.078 0 00.084-.028c.462-.630.873-1.295 1.226-1.994a.076.076 0 00-.042-.106 13.107 13.107 0 01-1.872-.892.077.077 0 01-.008-.128c.126-.094.252-.192.372-.291a.074.074 0 01.078-.011c3.928 1.793 8.180 1.793 12.061 0a.074.074 0 01.079.010c.120.099.246.198.373.292a.077.077 0 01-.007.128 12.299 12.299 0 01-1.873.891.077.077 0 00-.041.107c.360.698.772 1.363 1.225 1.993a.076.076 0 00.084.029c1.961-.607 3.950-1.522 6.002-3.030a.077.077 0 00.032-.055c.500-5.177-.838-9.674-3.549-13.660a.061.061 0 00-.031-.029zM8.020 15.331c-1.183 0-2.157-1.086-2.157-2.419 0-1.333.956-2.419 2.157-2.419 1.211 0 2.176 1.095 2.157 2.419 0 1.333-.956 2.419-2.157 2.419zm7.975 0c-1.183 0-2.157-1.086-2.157-2.419 0-1.333.955-2.419 2.157-2.419 1.211 0 2.176 1.095 2.157 2.419 0 1.333-.946 2.419-2.157 2.419z"/></g></svg></span>
    <span class="app"><svg viewBox="0 0 32 32"><rect x="2" y="1" width="28" height="30" rx="12" fill="#3b8cf5"/><rect x="7" y="11" width="12" height="10" rx="2" fill="#fff"/><path d="M20 15l5-3.500v9L20 17z" fill="#fff"/></svg></span>
    <span class="app app-dot"><svg viewBox="0 0 32 32"><rect x="2" y="2" width="28" height="28" fill="#000" stroke="#bfbfbf" stroke-width="1.500"/><rect x="2" y="2" width="28" height="4" fill="#bfbfbf"/><path d="M5 9h3M9 9h6M5 12h8" stroke="#ddd"/></svg></span>
    <span class="app app-dot"><svg viewBox="0 0 32 32"><ellipse cx="16" cy="16" rx="13" ry="15.500" fill="#555"/><path d="M5 9l20-6M3 14l24-8M3 19l26-9M5 24l24-10M9 28l19-11" stroke="#ccc" stroke-width="1.600"/></svg></span>
    <span class="app app-dot"><svg viewBox="0 0 32 32"><path d="M16 1c1 6 11 12 11 20a11 10 0 01-22 0C5 13 14 8 16 1z" fill="#e0559a"/><path d="M16 1c1 6 6 8 8 12-6-1-12 1-17 5 1-6 7-10 9-17z" fill="#f7a823"/><path d="M5 21c4-3 10-3 22 0a11 10 0 01-22 0z" fill="#17a7d8"/></svg></span>
  </div>
  <div class="tray">
    <svg class="tr-caret" viewBox="0 0 14 8"><path d="M1 7l6-6 6 6" fill="none" stroke="#fff" stroke-width="1.200"/></svg>
    <svg class="tr-cloud" viewBox="0 0 20 14"><path d="M5 13a4 4 0 010-8 6 6 0 0111 2 3 3 0 010 6z" fill="#d9e2ea"/></svg>
    <span class="tr-ime">中</span>
    <svg class="tr-ic" viewBox="0 0 20 20"><path d="M2 7a11 11 0 0116 0M4.500 10a7.500 7.500 0 0111 0M7 13a4 4 0 016 0" fill="none" stroke="#fff" stroke-width="1.400"/><circle cx="10" cy="16" r="1.500" fill="#fff"/></svg>
    <svg class="tr-ic" viewBox="0 0 20 20"><path d="M2 7h3l5-4v14l-5-4H2z" fill="none" stroke="#fff" stroke-width="1.300"/><path d="M13 7a4 4 0 010 6M15.500 5a7 7 0 010 10" fill="none" stroke="#fff" stroke-width="1.100"/></svg>
    <svg class="tr-ic" viewBox="0 0 20 20"><rect x="7" y="5" width="11" height="12" rx="1.500" fill="none" stroke="#fff" stroke-width="1.300"/><rect x="3" y="1" width="6" height="10" rx="1" fill="#fff"/><path d="M6 11v6" stroke="#fff" stroke-width="1.400"/></svg>
    <div class="clock"><span>上午 02:01</span><span>2022/6/12</span></div>
    <span class="notif">30</span>
  </div>
</footer>

<div class="status">https://github.com/40923149r/cd2022/tree/main/downloads</div>
<div class="tooltip">downloads</div>
<div class="shout"><span class="shout-cjk">按</span>downloads</div>
<svg class="markup" viewBox="0 0 1920 1080">
  <path d="M408 507L430 516 400 628 408 633 351 720 357 619 375 625z" fill="#fff" stroke="#ed1c24" stroke-width="9" stroke-miterlimit="10"/>
  <path d="M204 772L354 776" stroke="#ed1c24" stroke-width="9" stroke-linecap="round"/>
</svg>
</body>
</html>
```
FILE: styles.css
```css
* { box-sizing: border-box; }
html, body { margin: 0; padding: 0; }
body {
  width: 1920px; height: 1080px; overflow: hidden; position: relative;
  display: flex; flex-direction: column; background: #fff;
  font-family: "Open Sans", "Noto Sans CJK TC", sans-serif; font-size: 17px; color: #24292f;
  letter-spacing: -.15px;
}
.defs { position: absolute; }
a { text-decoration: none; }
h2, p, ul { margin: 0; padding: 0; }
i { font-style: normal; display: inline-block; }
b { font-weight: 600; }
svg { flex: none; display: block; fill-rule: evenodd; }

/* Chrome tab strip */
.tabstrip { height: 43px; flex: none; background: #dee1e6; display: flex; align-items: center; padding-left: 10px; position: relative; }
.tab { height: 43px; display: flex; align-items: center; position: relative; font-size: 15.2px; color: #3c4043; letter-spacing: -.05px; }
.tab-active { width: 299px; background: #fff; border-radius: 10px 10px 0 0; padding-left: 15px; }
.tab-idle { width: 298px; padding-left: 16px; }
.tab-fav { width: 20px; height: 20px; fill: #24292f; }
.camel-box { background: #fff; }
.tab-title { margin-left: 10px; }
.tab-close { position: absolute; right: 13px; top: 10px; font-size: 15px; color: #3c4043; }
.tab-sep { width: 1px; height: 24px; background: #9aa0a6; }
.newtab { width: 17px; height: 17px; margin-left: 19px; fill: #3c4043; }
.winctl { margin-left: auto; display: flex; gap: 45px; padding-right: 24px; }
.winctl svg { width: 12px; height: 12px; }

/* Chrome toolbar */
.toolbar { height: 44px; flex: none; background: #fff; display: flex; align-items: center; padding-left: 17px; }
.nav-ic { width: 20px; height: 20px; margin-right: 20px; }
.omnibox { width: 1608px; height: 36px; margin-left: -2px; border-radius: 18px; background: #f1f3f4; display: flex; align-items: center; padding-left: 17px; }
.lock { width: 14px; height: 16px; }
.url { margin-left: 12px; font-size: 18.4px; color: #5f6368; letter-spacing: -.3px; }
.url-host { color: #202124; }
.omni-actions { margin-left: auto; display: flex; gap: 21px; padding-right: 10px; }
.omni-actions svg { width: 20px; height: 20px; }
.tool-actions { display: flex; align-items: center; margin-left: 19px; }
.puzzle { width: 20px; height: 20px; }
.panel { width: 20px; height: 20px; margin-left: 21px; }
.avatar { width: 29px; height: 29px; margin-left: 15px; border-radius: 50%; background: #7b1fa2; color: #fff; font-size: 14px; display: flex; align-items: center; justify-content: center; }
.dots { width: 4px; height: 18px; margin-left: 25px; fill: #5f6368; }

/* Bookmarks */
.bookmarks { height: 41px; flex: none; background: #fff; padding: 0 0 3px 19px; display: grid; grid-template-columns: 90px 113px 79px 192px 145px 93px 101px 188px 191px 189px 142px 187px 161px 1fr; align-items: center; font-size: 15.5px; color: #3c4043; letter-spacing: -.25px; }
.bm { display: flex; align-items: center; white-space: nowrap; }
.bm svg { width: 20px; height: 20px; margin-right: 10px; }
.bm:first-child svg { margin-right: 8px; }
.bm-map svg { width: 14px; margin-right: 15px; }
.bm-nf svg { width: 14px; margin-right: 11px; }
.bm-g svg { width: 17px; margin-right: 10px; }
.bm-more { font-size: 17px; color: #5f6368; }

/* Viewport */
.viewport { height: 892px; flex: none; display: flex; overflow: hidden; }
.page { width: 1901px; flex: none; overflow: hidden; }
.scrollbar { width: 19px; flex: none; background: #f1f1f1; display: flex; flex-direction: column; align-items: center; position: relative; }
.sb-up { margin-top: 7px; border: 5px solid transparent; border-top: 0; border-bottom: 7px solid #a3a3a3; }
.sb-thumb { width: 17px; height: 365px; margin-top: 8px; background: #c1c1c1; }
.sb-down { margin-top: auto; margin-bottom: 7px; border: 5px solid transparent; border-bottom: 0; border-top: 7px solid #505050; }

/* GitHub header */
.gh-header { height: 79px; background: #24292f; display: flex; align-items: center; padding-left: 40px; color: #fff; }
.gh-logo { width: 40px; height: 40px; fill: #fff; }
.gh-search { width: 340px; height: 38px; margin-left: 20px; border: 1px solid #57606a; border-radius: 7px; display: flex; align-items: center; justify-content: space-between; padding: 0 6px 0 15px; color: #d0d3d6; font-size: 17px; }
.gh-search kbd { width: 24px; height: 26px; border: 1px solid #57606a; border-radius: 4px; display: flex; align-items: center; justify-content: center; font: 13px "Open Sans", sans-serif; color: #959da5; }
.gh-nav { font-weight: 600; font-size: 16.6px; color: #fff; white-space: nowrap; letter-spacing: -.25px; }
.nav-a { margin-left: 20px; width: 122px; }
.nav-b { width: 67px; }
.nav-c { width: 118px; }
.gh-right { margin-left: auto; display: flex; align-items: center; padding-right: 42px; }
.ic-w { width: 20px; height: 20px; fill: #fff; }
.plus { margin-left: 19px; width: 20px; height: 20px; }
.caret { border: 5px solid transparent; border-bottom: 0; border-top: 5px solid #24292f; margin-left: 9px; vertical-align: middle; }
.caret-w { border-top-color: #fff; }
.gh-right .caret { margin-left: 6px; }
.me { width: 26px; height: 26px; margin-left: 20px; border-radius: 50%; background: linear-gradient(#d55665 0 62%, #f3f3f3 62% 82%, #d55665 82%); }

/* Repo head */
.repohead { height: 141px; padding-top: 22px; background: #f6f8fa; border-bottom: 2px solid #d8dee4; }
.title-row { height: 35px; padding: 0 43px 0 41px; display: flex; align-items: center; }
.ic-repo { width: 20px; height: 20px; fill: #57606a; margin-right: 8px; }
.repo-owner { font-size: 24px; color: #0969da; }
.repo-slash { font-size: 24px; color: #57606a; margin: 0 6px; }
.repo-name { font-size: 24px; font-weight: 600; color: #0969da; letter-spacing: -.5px; }
.label { height: 25px; margin-left: 12px; padding: 0 9px; display: flex; align-items: center; border: 1px solid #d0d7de; border-radius: 13px; font-size: 14.5px; font-weight: 500; color: #57606a; }
.repo-actions { margin-left: auto; display: flex; gap: 11px; }
.rbtn { height: 35px; display: flex; align-items: center; border: 1px solid #d8dee4; border-bottom-color: #cfd6dc; border-radius: 7px; background: #f6f8fa; font-size: 15px; font-weight: 500; color: #24292f; box-shadow: 0 1px 0 rgba(27,31,36,.04); }
.rbtn .ic { width: 20px; height: 20px; }
.rb-pin { width: 82px; padding-left: 14px; gap: 11px; }
.rb-watch { width: 166px; padding-left: 15px; gap: 5px; }
.rb-fork { width: 123px; padding-left: 15px; gap: 10px; color: #8c959f; }
.rb-fork .ic { fill: #8c959f; }
.rb-fork .pill { color: #8c959f; margin-left: -3px; }
.rb-star { width: 165px; padding-left: 15px; gap: 14px; position: relative; }
.pill { width: 25px; height: 26px; margin-left: 0; border-radius: 13px; background: #e6e8ea; display: flex; align-items: center; justify-content: center; font-weight: 400; font-size: 14px; }
.rb-star .pill { margin-left: -8px; }
.rb-split { position: absolute; right: 0; top: 0; bottom: 0; width: 41px; border-left: 1px solid #d8dee4; display: flex; align-items: center; justify-content: center; }
.rb-split .caret, .rb-watch .caret { margin-left: 0; border-top-color: #57606a; }
.rb-watch .caret { margin-left: 3px; }
.ic { width: 20px; height: 20px; fill: #57606a; }
.ic.dark { fill: #24292f; }

.rtabs { margin-top: 28px; height: 50px; display: grid; grid-template-columns: 101px 109px 160px 119px 123px 96px 123px 123px 1fr; margin-left: 40px; }
.rtab { position: relative; height: 50px; display: flex; align-items: center; gap: 11px; padding-left: 10px; font-size: 17px; letter-spacing: -.3px; color: #24292f; }
.rtab-on { font-weight: 600; }
.rtab-on::after { content: ""; position: absolute; left: 0; bottom: -4px; width: 92px; height: 3px; background: #fd8c73; }

/* Main layout */
.layout { padding: 29px 0 0 190px; display: grid; grid-template-columns: 1120px 370px; column-gap: 30px; }
.filebar { height: 40px; display: flex; align-items: center; }
.btn { height: 40px; display: flex; align-items: center; justify-content: center; border: 1px solid #d8dee4; border-radius: 7px; background: #f6f8fa; font-size: 17.5px; font-weight: 500; box-shadow: 0 1px 0 rgba(27,31,36,.04); }
.btn .caret { margin-left: 5px; }
.btn-branch { width: 130px; gap: 8px; font-size: 16.5px; }
.btn-branch .caret { margin-left: 0; border-top-color: #57606a; }
.btn-branch .ic { fill: #57606a; }
.btn-go { width: 116px; margin-left: auto; }
.btn-add { width: 120px; margin-left: 10px; }
.btn-code { width: 99px; margin-left: 10px; background: #2da44e; border-color: #2a9a49; color: #fff; }
.meta { display: flex; align-items: center; gap: 3px; color: #57606a; white-space: nowrap; font-size: 16.5px; }
.meta b { color: #24292f; }
.meta-branch { margin-left: 22px; }
.meta-tag { margin-left: 18px; gap: 5px; font-size: 17px; }
.filebox { margin-top: 20px; border: 1px solid #d0d7de; border-radius: 7px 7px 0 0; height: 600px; }
.commit { height: 68px; background: #f6f8fa; border-radius: 6px 6px 0 0; border-bottom: 2px solid #d0d7de; padding: 0 21px 0 60px; display: flex; align-items: center; color: #57606a; }
.commit-msg { margin-right: auto; color: #24292f; }
.ic-check { width: 20px; height: 20px; fill: #1a7f37; }
.sha { margin-left: 11px; font: 13.8px "Liberation Mono", monospace; color: #57606a; letter-spacing: 0; }
.commit-age { margin-left: 11px; }
.hist { margin-left: 18px; }
.commit-count { margin-left: 6px; letter-spacing: -.35px; }
.commit-count b { color: #24292f; }
.row { height: 46.2px; border-bottom: 1px solid #d8dee4; padding: 0 21px 0 20px; display: flex; align-items: center; }
.folder { width: 20px; height: 20px; fill: #54aeff; }
.name { width: 321px; margin-left: 20px; color: #24292f; }
.name-link { color: #0969da; text-decoration: underline; }
.msg { flex: 1; color: #57606a; }
.age { color: #57606a; }

/* Sidebar */
.side { width: 370px; padding-top: 2px; }
.about-head { display: flex; justify-content: space-between; align-items: center; height: 28px; padding-right: 1px; }
.side h2 { font-size: 19px; font-weight: 600; color: #24292f; }
.about-desc { margin-top: 23px; height: 28px; line-height: 28px; font-size: 19.4px; font-style: italic; color: #57606a; white-space: nowrap; letter-spacing: 0; }
.about-list { margin-top: 14px; list-style: none; }
.about-list li { height: 36.4px; display: flex; align-items: center; color: #57606a; }
.about-list .ic { margin-right: 15px; }
.about-list b { color: #57606a; }
.side-block { margin-top: 24px; padding-top: 32px; border-top: 2px solid #d8dee4; height: 156px; }
.side-block + .side-block { margin-top: 0; }
.side-note { margin-top: 21px; height: 23px; line-height: 23px; font-size: 14.5px; color: #57606a; }
.side-link { display: block; height: 23px; line-height: 23px; font-size: 14.5px; color: #0969da; }
.side-end { border-top: 2px solid #d8dee4; }

/* Taskbar */
.taskbar { height: 60px; flex: none; background: #162a36; color: #fff; display: flex; align-items: center; }
.weather { width: 575px; flex: none; display: flex; align-items: center; padding-left: 25px; }
.weather svg { width: 32px; height: 32px; }
.weather-text { margin-left: 8px; display: flex; flex-direction: column; font-size: 15px; line-height: 21px; }
.apps { display: flex; align-items: center; }
.app { width: 55px; height: 60px; display: flex; align-items: center; justify-content: center; position: relative; }
.app svg { width: 30px; height: 30px; }
.app-dot::after { content: ""; position: absolute; left: 25px; bottom: 5px; width: 6px; height: 4px; border-radius: 2px; background: #9aa5ad; }
.app-on { background: #273a45; border-radius: 5px; width: 50px; margin: 0 2.5px; height: 50px; }
.app-on::after { content: ""; position: absolute; left: 15px; bottom: 1px; width: 18px; height: 4px; border-radius: 2px; background: #4cc2ff; }
.app-k { font: 700 16px "Open Sans", sans-serif; fill: #fff; text-anchor: middle; }
.app-w { font: 700 12px "Open Sans", sans-serif; fill: #fff; text-anchor: middle; }
.tray { margin-left: auto; display: flex; align-items: center; padding-right: 20px; }
.tr-caret { width: 16px; height: 9px; }
.tr-cloud { width: 20px; height: 14px; margin-left: 11px; }
.tr-ime { margin-left: 16px; font-size: 18px; }
.tr-ic { width: 22px; height: 22px; margin-left: 7px; }
.tr-ime + .tr-ic { margin-left: 19px; }
.clock { margin-left: 18px; width: 72px; display: flex; flex-direction: column; align-items: center; font-size: 14.4px; line-height: 21px; white-space: nowrap; }
.notif { width: 26px; height: 26px; margin-left: 6px; border-radius: 50%; background: #4cc2ff; color: #16242c; font-size: 13.5px; display: flex; align-items: center; justify-content: center; }

/* Overlays */
.status { position: absolute; left: 0; top: 992px; width: 449px; height: 28px; padding-left: 6px; background: #dee1e6; border-radius: 0 7px 0 0; font-size: 15.3px; line-height: 29px; letter-spacing: -.03px; color: #3c4043; white-space: nowrap; }
.tooltip { position: absolute; left: 342px; top: 782px; width: 98px; height: 32px; border: 1px solid #767676; border-top-color: #333; border-left-color: #333; background: #fff; font-size: 15.5px; line-height: 28px; text-align: center; color: #444; letter-spacing: 0; }
.shout { position: absolute; left: 378px; top: 409px; font-size: 83px; line-height: 70px; color: #ed1c24; white-space: nowrap; letter-spacing: -1px; }
.shout-cjk { font-family: "Noto Sans CJK TC", sans-serif; font-size: 74px; font-weight: 300; margin-right: 2px; }
.markup { position: absolute; left: 0; top: 0; width: 1920px; height: 1080px; pointer-events: none; }
```
